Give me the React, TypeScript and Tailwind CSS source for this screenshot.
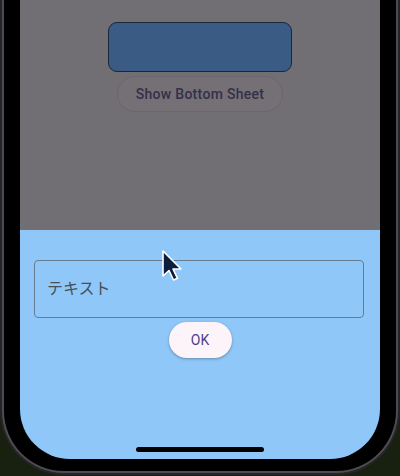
export default function App() {
  return (
    <div className="relative h-[476px] w-[400px] overflow-hidden bg-[#18200f] font-['Roboto','Noto_Sans_CJK_JP',sans-serif]">
      <div className="h-[475px] w-full rounded-b-[64px] bg-[#262428] px-[2px] pb-[2px]">
        <div className="h-full rounded-b-[62px] border-x-2 border-b-2 border-[#4e4c50] bg-black px-[16px] pb-[12px]">
          <div className="flex h-full flex-col overflow-hidden rounded-b-[50px]">
            <div className="flex h-[230px] shrink-0 flex-col items-center bg-[#726f74] pt-[22px]">
              <div className="h-[50px] w-[184px] rounded-[9px] border border-[#1c2638] bg-[#395b84]" />
              <button className="mt-[4px] flex h-[36px] w-[166px] items-center justify-center rounded-full border border-[#6a666d] bg-[#747075] text-[14px] font-medium tracking-[0.3px] text-[#33304a]">
                Show Bottom Sheet
              </button>
            </div>
            <div className="flex flex-1 flex-col bg-[#8fc7f8]">
              <div className="ml-[14px] mt-[30px] flex h-[58px] w-[330px] items-center rounded-[4px] border border-[#687c91] pl-[12px] text-[16px] text-[#46505a]">
                テキスト
              </div>
              <button className="mt-[4px] flex h-[36px] w-[63px] items-center justify-center self-center rounded-full bg-[#fdf4f9] text-[14px] text-[#4b3f8c] shadow-[0_1px_3px_rgba(0,0,0,0.3)]">
                OK
              </button>
              <div className="mb-[7px] mt-auto h-[5px] w-[128px] self-center rounded-full bg-black" />
            </div>
          </div>
        </div>
      </div>
      {/* mouse pointer */}
      <svg className="absolute left-[161px] top-[249px]" width="24" height="34" viewBox="0 0 24 34">
        <path
          d="M2 2 L2 27 L8 21.5 L12.5 31 L16.5 29.3 L12 20 L20 20 Z"
          fill="#0f1d3d"
          stroke="white"
          strokeWidth="1.6"
          strokeLinejoin="round"
        />
      </svg>
    </div>
  );
}
